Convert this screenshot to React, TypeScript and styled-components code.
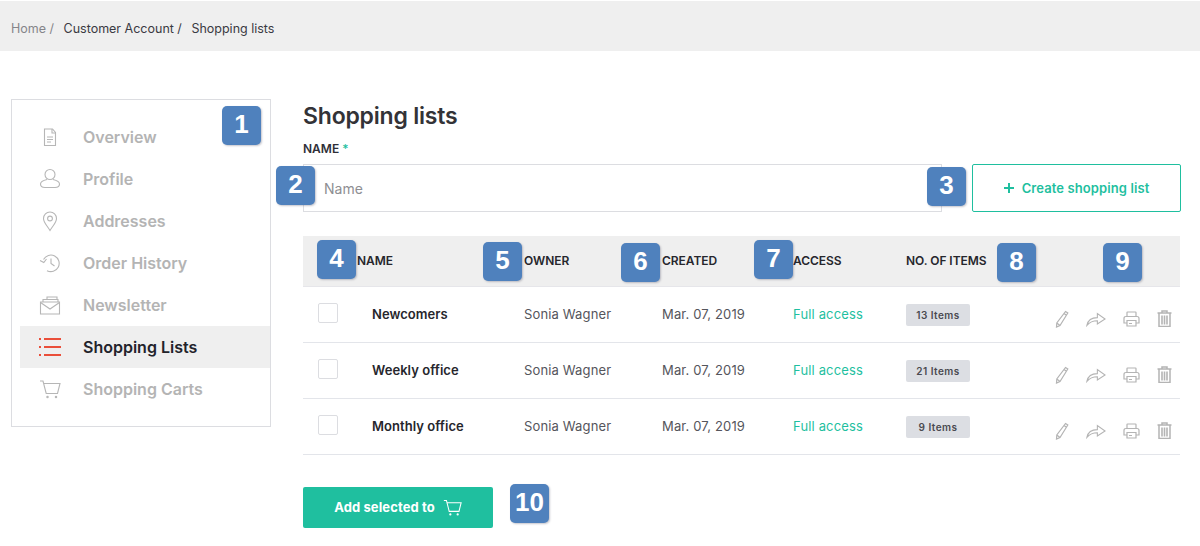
import React from "react";
import styled, { createGlobalStyle } from "styled-components";

const Global = createGlobalStyle`
  html, body { margin: 0; padding: 0; background: #fff; }
  body { font-family: Inter, "Liberation Sans", sans-serif; color: #2f2f33; }
  * { box-sizing: border-box; }
`;

const Page = styled.div`
  position: relative;
  width: 1200px;
  height: 546px;
  overflow: hidden;
  padding-top: 1px;
`;
const Crumbs = styled.nav`
  height: 50px;
  background: #efefef;
  display: flex;
  align-items: center;
  padding: 4px 0 0 11px;
  font-size: 12.5px;
  gap: 9.5px;
`;
const Crumb = styled.span<{ $muted?: boolean }>`
  color: ${(p) => (p.$muted ? "#85858a" : "#3a3a42")};
  white-space: pre;
`;
const Body = styled.div`
  display: flex;
  align-items: flex-start;
  padding: 48px 19px 0 11px;
  gap: 32px;
`;
const Side = styled.aside`
  width: 260px;
  height: 328px;
  border: 1px solid #dcdde1;
  padding: 16px 0 0 8px;
  flex: none;
`;
const SideItem = styled.div<{ $active?: boolean }>`
  height: 42px;
  display: flex;
  align-items: center;
  padding-left: 19px;
  gap: 22px;
  font-size: 16px;
  font-weight: 600;
  letter-spacing: 0;
  color: ${(p) => (p.$active ? "#23232b" : "#b4b4b4")};
  background: ${(p) => (p.$active ? "#efefef" : "transparent")};
`;
const SideIcon = styled.svg<{ $accent?: boolean }>`
  width: 22px;
  height: 22px;
  flex: none;
  fill: none;
  stroke: ${(p) => (p.$accent ? "#ea4f3a" : "#b6b6b6")};
  stroke-width: ${(p) => (p.$accent ? 2 : 1.1)};
`;
const Main = styled.main`
  flex: 1;
  min-width: 0;
  padding-top: 1px;
`;
const Title = styled.h1`
  margin: 0;
  font-size: 23px;
  line-height: 32px;
  font-weight: 600;
  letter-spacing: -0.2px;
  color: #333337;
`;
const Label = styled.label`
  display: block;
  margin-top: 9px;
  height: 16px;
  font-size: 12px;
  line-height: 16px;
  font-weight: 600;
  color: #2f2f38;
  b { color: #1fbf9f; font-weight: 500; }
`;
const FormRow = styled.div`
  display: flex;
  gap: 30px;
  margin-top: 7px;
`;
const NameInput = styled.div`
  width: 639px;
  height: 48px;
  border: 1px solid #dcdde1;
  display: flex;
  align-items: center;
  padding-left: 20px;
  font-size: 14px;
  color: #8e8e92;
`;
const CreateBtn = styled.div`
  width: 209px;
  height: 48px;
  border: 1px solid #1fbf9f;
  border-radius: 2px;
  display: flex;
  align-items: center;
  justify-content: center;
  gap: 8px;
  color: #1fbf9f;
  font-size: 13px;
  font-weight: 600;
  letter-spacing: 0.1px;
  svg { width: 10px; height: 10px; stroke: #1fbf9f; stroke-width: 2; }
`;
const Table = styled.div`
  margin-top: 24px;
  width: 877px;
`;
const cols = "54px 167px 138px 131px 113px 100px 1fr";
const Head = styled.div`
  display: grid;
  grid-template-columns: ${cols};
  height: 51px;
  align-items: center;
  padding-bottom: 2px;
  background: #efefef;
  border-bottom: 1px solid #e6e6ea;
  font-size: 12px;
  font-weight: 600;
  letter-spacing: -0.05px;
  color: #26262c;
`;
const Row = styled.div`
  display: grid;
  grid-template-columns: ${cols};
  height: 56px;
  align-items: center;
  border-bottom: 1px solid #e3e5ea;
  font-size: 13px;
  letter-spacing: 0.15px;
  color: #55555c;
`;
const Check = styled.span`
  width: 20px;
  height: 20px;
  margin: -3px 0 0 15px;
  border: 1px solid #dcdde1;
  border-radius: 2px;
`;
const Cell = styled.span`
  padding-bottom: 2px;
`;
const RowName = styled(Cell)`
  padding-left: 15px;
  font-weight: 600;
  letter-spacing: 0.05px;
  color: #26262c;
`;
const Access = styled(Cell)`
  color: #1fbf9f;
`;
const Pill = styled.span`
  justify-self: start;
  width: 64px;
  height: 22px;
  background: #dcdee3;
  border-radius: 2px;
  display: flex;
  align-items: center;
  justify-content: center;
  font-size: 10px;
  font-weight: 600;
  letter-spacing: 0.45px;
  color: #4a4a50;
`;
const Actions = styled.div`
  display: flex;
  justify-content: flex-end;
  align-items: center;
  gap: 17px;
  padding: 8px 8px 0 0;
  svg { fill: none; stroke: #b4b4b4; stroke-width: 1.2; flex: none; }
`;
const AddBtn = styled.div`
  margin-top: 32px;
  width: 190px;
  height: 41px;
  padding-bottom: 2px;
  background: #1fbf9f;
  border-radius: 2px;
  display: flex;
  align-items: center;
  justify-content: center;
  gap: 8px;
  color: #fff;
  font-size: 13px;
  font-weight: 700;
  letter-spacing: 0.1px;
  svg { fill: none; stroke: #fff; stroke-width: 1.2; margin-top: 2px; }
`;
const Badge = styled.div<{ $x: number; $y: number }>`
  position: absolute;
  left: ${(p) => p.$x}px;
  top: ${(p) => p.$y}px;
  width: 39px;
  height: 39px;
  border-radius: 5px;
  background: #4f81bd;
  box-shadow: 1px 1px 2px rgba(90, 90, 110, 0.35);
  color: #fff;
  font-family: "Liberation Sans", Arial, sans-serif;
  font-weight: 700;
  font-size: 26px;
  display: flex;
  align-items: center;
  justify-content: center;
  padding-bottom: 2px;
`;

const CartPath = () => (
  <>
    <path d="M1 3h3l3.2 12.5h11.3L21 5.5H5" />
    <circle cx="8.5" cy="19" r="0.7" />
    <circle cx="17" cy="19" r="0.7" />
  </>
);
const sideIcons: Record<string, React.ReactNode> = {
  file: (
    <>
      <path d="M5.500 3h8L16.500 6.500V19.500H5.500z" />
      <path d="M13 3v4h3.500M8 11h6M8 13.500h6M8 16h4" />
    </>
  ),
  user: (
    <>
      <circle cx="11" cy="6.500" r="5" />
      <path d="M8 11.500c-4.500 1-6.500 2.500-6.500 4.500 0 2.200 2 3.500 4.500 3.500h10c2.500 0 4.500-1.300 4.500-3.500 0-2-2-3.500-6.500-4.500" />
    </>
  ),
  pin: (
    <>
      <path d="M11 20.500C8 15.500 4.500 12.500 4.500 8.500a6.500 6.500 0 0 1 13 0c0 4-3.500 7-6.500 12z" />
      <circle cx="11" cy="8.500" r="2.400" />
    </>
  ),
  history: (
    <>
      <path d="M4.500 7.500A8.300 8.300 0 1 1 8 18.700" />
      <path d="M1 8.500l3.800 2 2.700-3.500" />
      <path d="M12 6.500v5l3.500 2.500" />
    </>
  ),
  mail: (
    <>
      <path d="M1.500 8h19v12h-19z" />
      <path d="M1.500 8.500L11 15l9.500-6.500" />
      <path d="M4 8V5.500h15V8M8 5V3h10v2" />
    </>
  ),
  cart: <CartPath />,
};

const menu = [
  ["file", "Overview"],
  ["user", "Profile"],
  ["pin", "Addresses"],
  ["history", "Order History"],
  ["mail", "Newsletter"],
  ["list", "Shopping Lists"],
  ["cart", "Shopping Carts"],
];

const rows = [
  ["Newcomers", "13 Items"],
  ["Weekly office", "21 Items"],
  ["Monthly office", "9 Items"],
];

const badges: [number, number][] = [
  [222, 106],
  [276, 166],
  [927, 167],
  [317, 240],
  [483, 242],
  [621, 243],
  [754, 240],
  [997, 243],
  [1103, 243],
  [510, 484],
];

export default function App() {
  return (
    <Page>
      <Global />
      <Crumbs>
        <Crumb $muted>Home /</Crumb>
        <Crumb>Customer Account /</Crumb>
        <Crumb>Shopping lists</Crumb>
      </Crumbs>
      <Body>
        <Side>
          {menu.map(([icon, text]) => (
            <SideItem key={text} $active={icon === "list"}>
              {icon === "list" ? (
                <SideIcon viewBox="0 0 22 22" $accent>
                  <path d="M5 3h17M5 11h17M5 19h17M0 3h2M0 11h2M0 19h2" />
                </SideIcon>
              ) : (
                <SideIcon viewBox="0 0 22 22">{sideIcons[icon]}</SideIcon>
              )}
              {text}
            </SideItem>
          ))}
        </Side>
        <Main>
          <Title>Shopping lists</Title>
          <Label>
            NAME <b>*</b>
          </Label>
          <FormRow>
            <NameInput>Name</NameInput>
            <CreateBtn>
              <svg viewBox="0 0 10 10">
                <path d="M5 0v10M0 5h10" />
              </svg>
              Create shopping list
            </CreateBtn>
          </FormRow>
          <Table>
            <Head>
              <span />
              <span>NAME</span>
              <span>OWNER</span>
              <span>CREATED</span>
              <span>ACCESS</span>
              <span>NO. OF ITEMS</span>
            </Head>
            {rows.map(([name, items]) => (
              <Row key={name}>
                <Check />
                <RowName>{name}</RowName>
                <Cell>Sonia Wagner</Cell>
                <Cell>Mar. 07, 2019</Cell>
                <Access>Full access</Access>
                <Pill>{items}</Pill>
                <Actions>
                  <svg width="14" height="18" viewBox="0 0 14 18">
                    <path d="M10.500 1.500l2.300 1.500L5 15.500 1.500 17l.3-4zM9 3.500l2.500 1.700M1.800 13L5 15.500" />
                  </svg>
                  <svg width="20" height="16" viewBox="0 0 22 16">
                    <path d="M1 15c1-5 5-8.500 11.500-8.500V2L21 8l-8.500 5.500V10C8 10 4 11.500 1 15z" />
                  </svg>
                  <svg width="17" height="16" viewBox="0 0 17 16">
                    <path d="M4 5V1.500Q4 1 4.500 1h8q.5 0 .5.500V5M3 5.500h11q2 0 2 2V12h-3M4 12H1V7.500q0-2 2-2M4 9.500h9V15H4zM6 12.500h3" />
                  </svg>
                  <svg width="15" height="17" viewBox="0 0 15 17">
                    <path d="M0.500 3h14M5 3V1h5v2M2 3h11v13.500H2z" strokeWidth="1.500" />
                    <path d="M5 5.500v9M7.500 5.500v9M10 5.500v9" strokeWidth="1.600" />
                  </svg>
                </Actions>
              </Row>
            ))}
          </Table>
          <AddBtn>
            Add selected to
            <svg width="19" height="19" viewBox="0 0 22 22">
              <CartPath />
            </svg>
          </AddBtn>
        </Main>
      </Body>
      {badges.map(([x, y], i) => (
        <Badge key={i} $x={x} $y={y}>
          {i + 1}
        </Badge>
      ))}
    </Page>
  );
}
